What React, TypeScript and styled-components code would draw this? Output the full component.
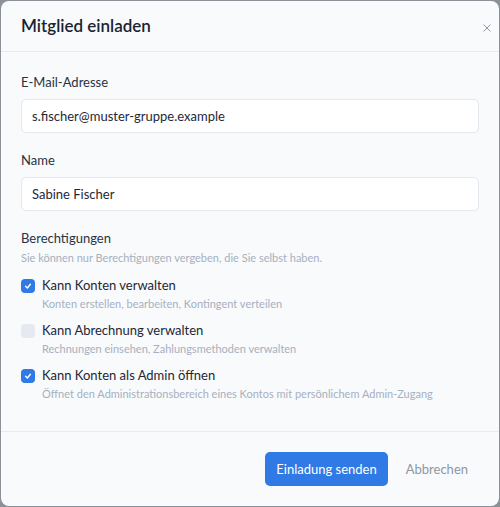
import styled, { createGlobalStyle } from "styled-components";

const GlobalStyle = createGlobalStyle`
  html, body {
    margin: 0;
    padding: 0;
    background: #8b9099;
  }
  body {
    font-family: "Lato", "Noto Sans", sans-serif;
    -webkit-font-smoothing: antialiased;
  }
  * { box-sizing: border-box; }
`;

const permissions = [
  {
    id: "accounts",
    title: "Kann Konten verwalten",
    desc: "Konten erstellen, bearbeiten, Kontingent verteilen",
    checked: true,
  },
  {
    id: "billing",
    title: "Kann Abrechnung verwalten",
    desc: "Rechnungen einsehen, Zahlungsmethoden verwalten",
    checked: false,
  },
  {
    id: "admin",
    title: "Kann Konten als Admin öffnen",
    desc: "Öffnet den Administrationsbereich eines Kontos mit persönlichem Admin-Zugang",
    checked: true,
  },
];

export default function App() {
  return (
    <>
      <GlobalStyle />
      <Backdrop>
        <Modal>
          <Header>
            <Title>Mitglied einladen</Title>
            <CloseButton aria-label="Schließen">
              <svg width="8" height="8" viewBox="0 0 10 10">
                <path d="M1 1 L9 9 M9 1 L1 9" stroke="#8a929e" strokeWidth="1.2" strokeLinecap="round" />
              </svg>
            </CloseButton>
          </Header>
          <Body>
            <Field>
              <Label>E-Mail-Adresse</Label>
              <Input defaultValue="s.fischer@muster-gruppe.example" />
            </Field>
            <Field>
              <Label>Name</Label>
              <Input defaultValue="Sabine Fischer" />
            </Field>
            <Section>
              <Label>Berechtigungen</Label>
              <Hint>Sie können nur Berechtigungen vergeben, die Sie selbst haben.</Hint>
              <CheckList>
                {permissions.map((p) => (
                  <CheckRow key={p.id}>
                    <Box $checked={p.checked}>
                      {p.checked && (
                        <svg width="8" height="8" viewBox="0 0 10 10">
                          <path d="M2 5.3 L4.2 7.4 L8 2.8" fill="none" stroke="#fff" strokeWidth="1.8" strokeLinecap="round" strokeLinejoin="round" />
                        </svg>
                      )}
                    </Box>
                    <CheckText>
                      <CheckTitle>{p.title}</CheckTitle>
                      <CheckDesc>{p.desc}</CheckDesc>
                    </CheckText>
                  </CheckRow>
                ))}
              </CheckList>
            </Section>
          </Body>
          <Footer>
            <PrimaryButton>Einladung senden</PrimaryButton>
            <LinkButton>Abbrechen</LinkButton>
          </Footer>
        </Modal>
      </Backdrop>
    </>
  );
}

const Backdrop = styled.div`
  width: 500px;
  height: 507px;
  padding: 1px;
  display: flex;
`;

const Modal = styled.div`
  flex: 1;
  display: flex;
  flex-direction: column;
  background: #f8fafc;
  border-radius: 8px;
  overflow: hidden;
`;

const Header = styled.div`
  height: 51px;
  display: flex;
  align-items: center;
  justify-content: space-between;
  padding: 0 8px 0 20px;
  border-bottom: 1px solid #e7ebf0;
`;

const Title = styled.h2`
  margin: 0;
  font-size: 17px;
  font-weight: 600;
  color: #1b2333;
  padding-bottom: 2px;
`;

const CloseButton = styled.button`
  border: none;
  background: none;
  padding: 0;
  display: flex;
  margin-top: 4px;
`;

const Body = styled.div`
  padding: 20px 20px 0;
  display: flex;
  flex-direction: column;
  gap: 17px;
  flex: 1;
`;

const Field = styled.div`
  display: flex;
  flex-direction: column;
  gap: 7px;
`;

const Section = styled.div`
  display: flex;
  flex-direction: column;
`;

const Label = styled.div`
  font-size: 13px;
  line-height: 20px;
  color: #2a3342;
`;

const Input = styled.input`
  height: 34px;
  width: 100%;
  border: 1px solid #e3e8ee;
  border-radius: 5px;
  background: #fff;
  padding: 0 10px;
  font-family: inherit;
  font-size: 13px;
  color: #1f2937;
  outline: none;
`;

const Hint = styled.div`
  font-size: 11px;
  line-height: 16px;
  color: #a7b0bf;
  margin-top: 2px;
`;

const CheckList = styled.div`
  display: flex;
  flex-direction: column;
  gap: 8px;
  margin-top: 9px;
`;

const CheckRow = styled.div`
  display: flex;
  gap: 7px;
`;

const Box = styled.span<{ $checked: boolean }>`
  width: 14px;
  height: 14px;
  margin-top: 4px;
  border-radius: 4px;
  flex-shrink: 0;
  display: flex;
  align-items: center;
  justify-content: center;
  background: ${(p) => (p.$checked ? "#2f7ae5" : "#e6eaf0")};
`;

const CheckText = styled.div`
  display: flex;
  flex-direction: column;
`;

const CheckTitle = styled.div`
  font-size: 13px;
  line-height: 20px;
  color: #1f2733;
`;

const CheckDesc = styled.div`
  font-size: 11px;
  line-height: 17px;
  color: #a7b0bf;
`;

const Footer = styled.div`
  height: 75px;
  border-top: 1px solid #e7ebf0;
  display: flex;
  align-items: center;
  justify-content: flex-end;
  gap: 18px;
  padding: 0 31px 0 20px;
`;

const PrimaryButton = styled.button`
  height: 34px;
  padding: 0 11px;
  border: none;
  border-radius: 5px;
  background: #2f7ae5;
  color: #fff;
  font-family: inherit;
  font-size: 13px;
`;

const LinkButton = styled.button`
  border: none;
  background: none;
  padding: 0;
  font-family: inherit;
  font-size: 13px;
  color: #8f97a4;
`;
